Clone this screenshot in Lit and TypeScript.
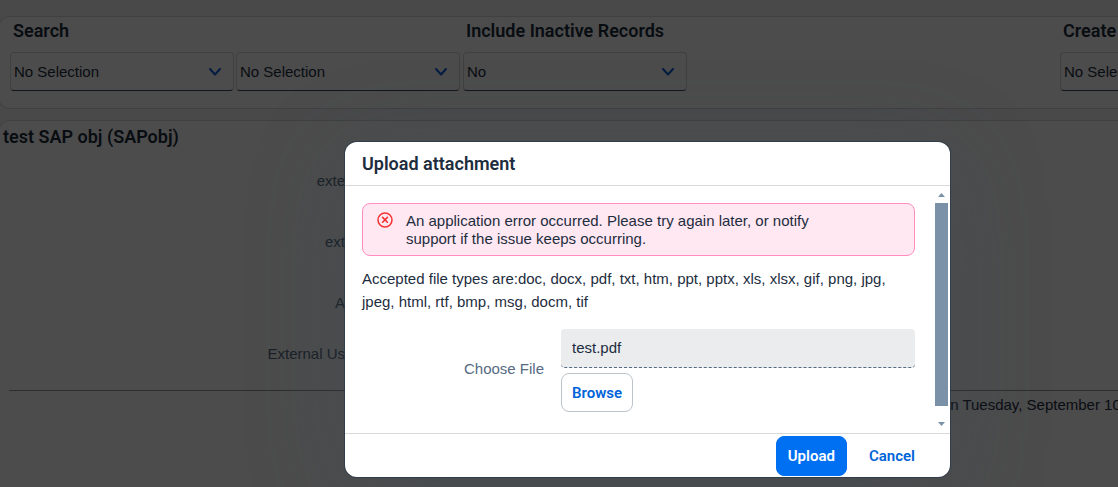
import { LitElement, html, css, svg } from "lit";
import { customElement } from "lit/decorators.js";

const chevron = svg`<svg class="chevron" viewBox="0 0 14 10" width="14" height="10" aria-hidden="true">
  <path d="M2 2 L7 7.5 L12 2" fill="none" stroke="currentColor" stroke-width="2" stroke-linecap="round" stroke-linejoin="round"/>
</svg>`;

@customElement("filter-bar")
export class FilterBar extends LitElement {
  static styles = css`
    :host { display: block; }
    .bar {
      display: flex;
      gap: 3px;
      padding: 4px 0 17px 11px;
    }
    .group { flex: none; }
    .grow { flex: 1 1 auto; }
    .edge { width: 58px; }
    .title {
      margin: 0;
      padding-left: 3px;
      font-family: Roboto, "Liberation Sans", sans-serif;
      font-size: 18px;
      font-weight: 600;
      line-height: 20px;
      white-space: nowrap;
      color: #1d2d3e;
    }
    .fields { display: flex; gap: 2px; margin-top: 11px; }
    .field {
      position: relative;
      flex: none;
      display: block;
      width: 224px;
      color: #0a5fd8;
    }
    .select {
      appearance: none;
      display: block;
      box-sizing: border-box;
      width: 100%;
      height: 39px;
      padding: 0 34px 0 3px;
      border: 1px solid #d5d7da;
      border-bottom-color: #3a4a66;
      border-radius: 4px;
      background: #fff;
      color: #1d2d3e;
      font: inherit;
    }
    .chevron {
      position: absolute;
      right: 12px;
      top: 15px;
    }
  `;

  private field(name: string, value: string) {
    return html`<span class="field">
      <select class="select" aria-label=${name}><option>${value}</option></select>
      ${chevron}
    </span>`;
  }

  render() {
    return html`<div class="bar">
      <div class="group">
        <h2 class="title">Search</h2>
        <div class="fields">
          ${this.field("Search field", "No Selection")}
          ${this.field("Search value", "No Selection")}
        </div>
      </div>
      <div class="group grow">
        <h2 class="title">Include Inactive Records</h2>
        <div class="fields">${this.field("Include Inactive Records", "No")}</div>
      </div>
      <div class="group edge">
        <h2 class="title">Create</h2>
        <div class="fields">${this.field("Create", "No Selection")}</div>
      </div>
    </div>`;
  }
}

@customElement("upload-dialog")
export class UploadDialog extends LitElement {
  static styles = css`
    :host { display: block; }
    .dialog {
      border-radius: 12px;
      background: #fff;
      color: #1d2d3e;
      box-shadow: 0 0 0 1px rgba(34, 53, 72, 0.6), 0 16px 96px rgba(60, 76, 90, 0.3);
    }
    .head {
      padding: 11px 17px;
      border-bottom: 1px solid #d9d9d9;
    }
    .title {
      margin: 0;
      font-family: Roboto, "Liberation Sans", sans-serif;
      font-size: 18px;
      font-weight: 600;
      line-height: 21px;
    }
    .body { display: flex; }
    .content {
      flex: 1;
      min-width: 0;
      padding: 17px 20px 21px 17px;
    }
    .message {
      display: flex;
      gap: 13px;
      padding: 8px 72px 7px 14px;
      border: 1px solid #ff8ebf;
      border-radius: 8px;
      background: #ffe8f2;
      line-height: 18px;
    }
    .error-icon { flex: none; }
    .types { margin: 11px 0 16px; line-height: 23px; }
    .form {
      display: grid;
      grid-template-columns: 182px 1fr;
      column-gap: 17px;
      align-items: center;
    }
    .label { padding-bottom: 4px; text-align: right; color: #556b82; }
    .picker { display: flex; flex-direction: column; align-items: flex-start; gap: 5px; }
    .file {
      box-sizing: border-box;
      width: 100%;
      height: 39px;
      padding: 0 11px 1px;
      border: 0;
      border-bottom: 1px dashed #556b82;
      border-radius: 4px;
      background: #eaecee;
      color: #1d2d3e;
      font: inherit;
    }
    .button {
      box-sizing: border-box;
      height: 39px;
      padding: 0 10px;
      border: 1px solid #bcc3ca;
      border-radius: 8px;
      background: #fff;
      color: #0064d9;
      font: 600 15px/20px Roboto, "Liberation Sans", sans-serif;
    }
    .scroll {
      display: flex;
      flex-direction: column;
      align-items: center;
      width: 13px;
      margin-right: 2px;
      padding: 7px 0;
      gap: 6px;
    }
    .thumb { flex: 1; width: 100%; margin-bottom: 10px; background: #7b91a8; }
    .foot {
      display: flex;
      justify-content: flex-end;
      gap: 11px;
      padding: 2px 24px 1px 17px;
      border-top: 1px solid #d9d9d9;
    }
    .primary {
      height: 40px;
      padding: 0 11px;
      border-color: #0070f2;
      background: #0070f2;
      color: #fff;
    }
    .plain { height: 40px; border-color: transparent; background: transparent; }
  `;

  render() {
    return html`<section class="dialog" role="dialog" aria-labelledby="title">
      <header class="head"><h1 class="title" id="title">Upload attachment</h1></header>
      <div class="body">
        <div class="content">
          <div class="message" role="alert">
            <svg class="error-icon" viewBox="0 0 16 16" width="16" height="16" aria-hidden="true">
              <circle cx="8" cy="8" r="7" fill="none" stroke="#f53232" stroke-width="1.5"/>
              <path d="M5.6 5.4 L10.4 10.2 M10.4 5.4 L5.6 10.2" fill="none" stroke="#f53232" stroke-width="1.6" stroke-linecap="round"/>
            </svg>
            <span>An application error occurred. Please try again later, or notify support if the issue keeps occurring.</span>
          </div>
          <p class="types">Accepted file types are:doc, docx, pdf, txt, htm, ppt, pptx, xls, xlsx, gif, png, jpg, jpeg, html, rtf, bmp, msg, docm, tif</p>
          <div class="form">
            <label class="label" for="file">Choose File</label>
            <div class="picker">
              <input class="file" id="file" type="text" readonly .value=${"test.pdf"} />
              <button class="button" type="button">Browse</button>
            </div>
          </div>
        </div>
        <div class="scroll" aria-hidden="true">
          <svg viewBox="0 0 7 4" width="7" height="4"><path d="M3.5 0 L7 4 H0 Z" fill="#7b91a8"/></svg>
          <div class="thumb"></div>
          <svg viewBox="0 0 7 4" width="7" height="4"><path d="M3.5 4 L7 0 H0 Z" fill="#7b91a8"/></svg>
        </div>
      </div>
      <footer class="foot">
        <button class="button primary" type="button">Upload</button>
        <button class="button plain" type="button">Cancel</button>
      </footer>
    </section>`;
  }
}

@customElement("app-root")
export class AppRoot extends LitElement {
  static styles = css`
    :host {
      display: block;
      position: relative;
      min-height: 100vh;
      overflow: hidden;
      background: #f5f6f7;
      color: #1d2d3e;
      font: 15px/20px "Liberation Sans", sans-serif;
    }
    .page {
      display: flex;
      flex-direction: column;
      gap: 11px;
      min-height: 100vh;
      box-sizing: border-box;
      padding-top: 16px;
    }
    .card {
      margin-left: -2px;
      border: 1px solid #d5d7da;
      border-right: 0;
      border-radius: 12px 0 0 12px;
      background: #fff;
    }
    .details { flex: 1; border-bottom: 0; border-bottom-left-radius: 0; }
    .heading {
      margin: 0;
      padding: 6px 4px;
      font-family: Roboto, "Liberation Sans", sans-serif;
      font-size: 18px;
      font-weight: 600;
      line-height: 20px;
    }
    .rows {
      display: grid;
      grid-template-columns: 336fr 773fr;
      grid-template-rows: 61px 61px 51px 46px;
      justify-items: end;
      margin: 0 0 0 10px;
      padding-top: 18px;
      border-bottom: 1px solid #999;
      color: #556b82;
    }
    .name { grid-column: 1; white-space: nowrap; }
    .stamp { margin: 0; padding: 4px 0 0 85%; white-space: nowrap; }
    .overlay {
      position: absolute;
      inset: 0;
      display: grid;
      grid-template-columns: 345fr 605fr 168fr;
      align-content: start;
      padding-top: 142px;
      background: rgba(0, 0, 0, 0.7);
    }
    .dialog { grid-column: 2; }
  `;

  private labels = ["exte", "ext", "A", "External Us"];

  render() {
    return html`
      <main class="page">
        <filter-bar class="card"></filter-bar>
        <section class="card details">
          <h2 class="heading">test SAP obj (SAPobj)</h2>
          <div class="rows">${this.labels.map((label) => html`<span class="name">${label}</span>`)}</div>
          <p class="stamp">n Tuesday, September 10</p>
        </section>
      </main>
      <div class="overlay"><upload-dialog class="dialog"></upload-dialog></div>
    `;
  }
}
